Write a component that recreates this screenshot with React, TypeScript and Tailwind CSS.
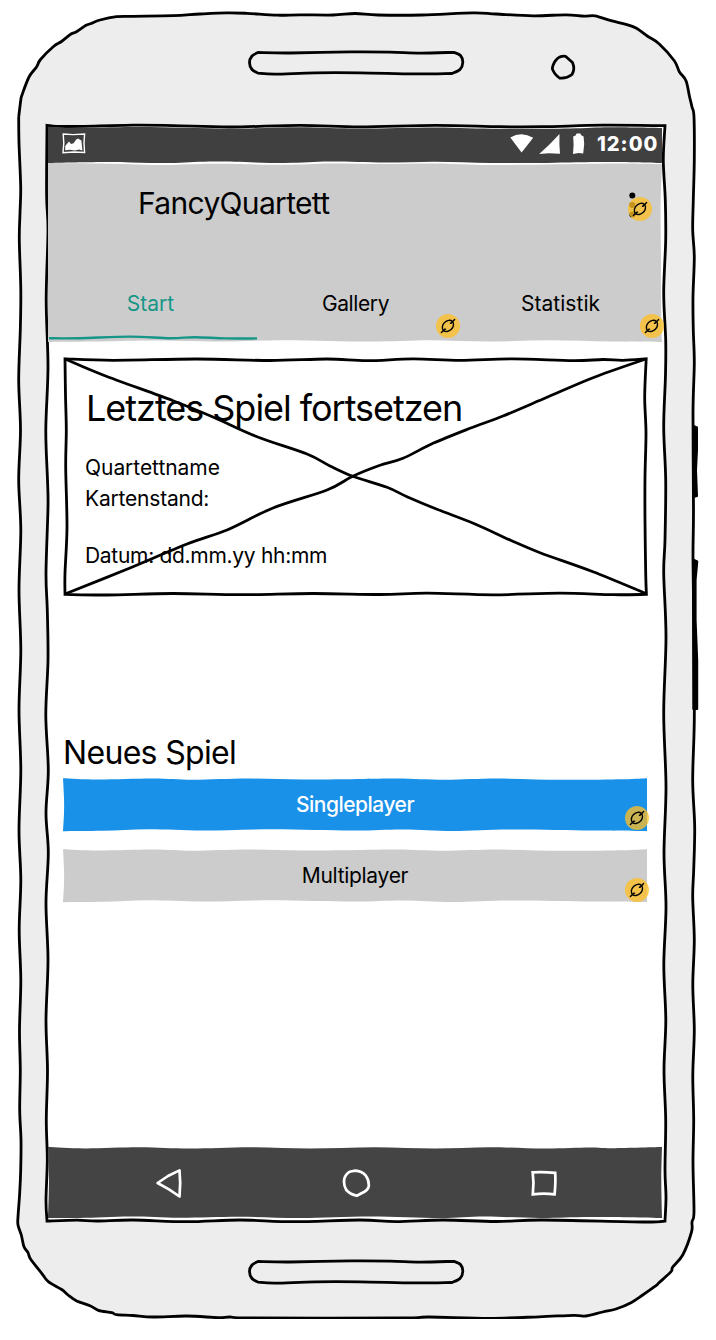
import React from "react";

type Pt = [number, number];

/** Smooth curve through a list of points (Catmull-Rom to Bezier). */
function curve(p: Pt[], move = true): string {
  let d = move ? `M${p[0][0]} ${p[0][1]}` : `L${p[0][0]} ${p[0][1]}`;
  for (let i = 0; i < p.length - 1; i++) {
    const a = p[Math.max(i - 1, 0)];
    const b = p[i];
    const c = p[i + 1];
    const e = p[Math.min(i + 2, p.length - 1)];
    d += `C${b[0] + (c[0] - a[0]) / 6} ${b[1] + (c[1] - a[1]) / 6} ${c[0] - (e[0] - b[0]) / 6} ${c[1] - (e[1] - b[1]) / 6} ${c[0]} ${c[1]}`;
  }
  return d;
}

/** Closed shape made of several wavy sides with sharp corners between them. */
const closed = (...sides: Pt[][]) => sides.map((s, i) => curve(s, i === 0)).join("") + "Z";

const BODY: Pt[] = [
  [18.7, 117], [20.8, 100], [22, 95], [29, 77], [36.5, 67], [40.5, 59.5], [53.5, 46.5], [61.5, 41.5], [71, 34], [76.5, 31.8],
  [86, 25.3], [90.5, 23.7], [100, 20], [116.5, 16.7], [133, 16.3], [173, 15.7], [200, 14], [227, 12.8], [247, 13.3],
  [277, 15.2], [300, 14.8], [333, 15], [355, 13.5], [378, 15], [422, 15], [473, 12.8], [496, 14], [533, 15.8], [566, 14.8],
  [584, 16.2], [595, 15.8], [611, 20.7], [626, 24.3], [636, 28], [648, 36.5], [659, 43.7], [674.3, 60.7], [679.3, 71.7],
  [686, 80.7], [689.5, 96.5], [692, 107], [694, 117], [694.3, 160], [693.3, 200], [692.7, 230], [694.3, 257], [693, 297],
  [693.3, 330], [694.3, 363], [693, 413], [693.5, 510], [693, 560], [694, 640], [694.3, 720], [692.7, 780], [694.7, 827],
  [693.7, 870], [692.7, 897], [694.3, 940], [692.8, 985], [694.3, 1030], [692.8, 1075], [693.7, 1120], [693, 1163], [694, 1212],
  [692, 1222], [691.5, 1232], [682.7, 1255], [672.7, 1267], [671, 1271.7], [658.7, 1283], [656, 1285.7], [642.7, 1295],
  [631, 1302.7], [616, 1309], [602.7, 1312], [586, 1316], [574, 1315.3], [539, 1316.8], [489, 1318.3], [429, 1317],
  [400, 1318], [253, 1318], [230, 1317], [218, 1317.7], [187, 1316], [153, 1317], [133, 1315.5], [116.7, 1314.7],
  [111.7, 1312.7], [98.3, 1310.3], [90, 1305.7], [76.7, 1301], [68, 1295], [61.7, 1289.5], [48.3, 1281.7], [41.7, 1273.3],
  [30.7, 1259.3], [28, 1252.7], [24, 1246.7], [21.3, 1235], [18, 1225], [18, 1216.7], [19.7, 1193], [20.7, 1170], [21, 1140],
  [19.7, 1110], [20.3, 1070], [19.5, 1030], [20.8, 980], [19.2, 930], [20.8, 880], [19, 830], [20.8, 770], [19, 710],
  [20.8, 650], [19, 590], [20.8, 530], [18.7, 480], [20.5, 430], [18.7, 380], [20.3, 330], [20.8, 290], [19.3, 240],
  [20, 213], [20.7, 187], [19, 143], [18.7, 117],
];

const SCREEN = closed(
  [[47, 125.3], [67, 126.5], [133, 125.2], [173, 125.6], [230, 127], [300, 125.4], [360, 126.8], [436, 125.3], [500, 126.7], [543, 126.7], [603, 125.2], [665, 125.7]],
  [[665, 125.7], [663.3, 160], [665.3, 200], [665.7, 240], [663.7, 293], [665.7, 340], [665.5, 375], [663.7, 427], [665.7, 480], [665, 540], [663.7, 573], [666, 637], [663.7, 713], [666, 787], [664, 853], [666, 907], [663.8, 965], [665.8, 1020], [664, 1070], [665.7, 1120], [665, 1170], [666, 1197], [665, 1220.7]],
  [[665, 1221], [643, 1222], [543, 1220], [496, 1221.5], [443, 1220], [396, 1221.7], [360, 1220], [293, 1221.7], [240, 1220], [187, 1221.7], [133, 1220], [97, 1221], [77, 1220.2], [47, 1221]],
  [[47, 1221], [46, 1200], [47.3, 1160], [46.3, 1120], [47.5, 1070], [46, 1020], [48, 960], [46, 903], [48.3, 853], [46, 813], [48.3, 770], [45.8, 715], [48, 660], [47.3, 610], [46, 573], [48, 507], [47.5, 480], [45.8, 430], [48, 367], [46.2, 300], [48, 230], [46.6, 195], [47, 125.3]],
);

const pill = (y: number) =>
  closed(
    [[258, y + 1], [290, y + 1.5], [350, y + 0.4], [390, y + 0.6], [420, y + 1.6], [454, y + 0.8]],
    [[454, y + 0.8], [460.5, y + 4], [462.8, y + 11], [460, y + 18], [452, y + 22]],
    [[452, y + 22], [414, y + 22.4], [360, y + 21.3], [315, y + 21.3], [275, y + 22.6], [258, y + 21.6]],
    [[258, y + 21.6], [252, y + 18], [249.5, y + 11], [252, y + 4.5], [258, y + 1]],
  );

function PhoneBody() {
  return (
    <svg className="absolute inset-0" width="716" height="1340" viewBox="0 0 716 1340" fill="none" stroke="#000" strokeWidth="2.8" strokeLinejoin="miter">
      <clipPath id="page-edge">
        <rect width="716" height="1319" />
      </clipPath>
      <g clipPath="url(#page-edge)">
        <path d={curve(BODY)} fill="#ededed" />
      </g>
      <path d="M693.5 426L697 427.5L697 450L696 470L697 496L693.5 497Z" fill="#000" strokeWidth="2" strokeLinejoin="round" />
      <path d="M693 559.5L697.3 561.5L695.6 580L695.6 620L697.2 660L697.2 709L693.3 709Z" fill="#000" strokeWidth="2" strokeLinejoin="round" />
      <path d={SCREEN} fill="#fff" />
      <path d={pill(51.5)} strokeLinejoin="round" />
      <path d={pill(1260.5)} strokeLinejoin="round" />
      <path d="M558 58Q561 55.7 565.5 56.3L572.5 62.5Q575.3 69 572 74.5Q566 79 559.5 78Q553.5 73.5 552.3 68.5Q553 62.5 558 58Z" strokeLinejoin="round" />
    </svg>
  );
}

/** Small marker that shows that an element is linked. */
function LinkBadge({ className }: { className: string }) {
  return (
    <svg className={`absolute size-6 ${className}`} viewBox="0 0 24 24" fill="none" stroke="#000" strokeWidth="1.4" strokeLinecap="round">
      <circle cx="12" cy="12" r="12" fill="#ffbf25" fillOpacity="0.77" stroke="none" />
      <ellipse cx="12" cy="11.9" rx="6.3" ry="4.8" transform="rotate(-45 12 12)" />
      <path d="M5.4 18.5L8.9 15.2L9.6 15.1M18.6 5.5L15 9.2L14.4 9.2" />
    </svg>
  );
}

function StatusBar() {
  return (
    <div className="relative h-[38px]">
      <svg className="absolute inset-0" width="616" height="38" viewBox="48 125 616 38">
        <path
          fill="#404040"
          d={closed(
            [[48, 126.7], [75, 127.8], [140, 127], [230, 128.6], [300, 127.3], [360, 128.6], [436, 127.4], [500, 128.8], [570, 128.5], [610, 127.3], [662, 128]],
            [[662, 128], [662, 163]],
            [[662, 163], [600, 162], [540, 163], [490, 163], [435, 161.8], [385, 162.6], [330, 161.6], [285, 163], [215, 161.6], [165, 163.2], [110, 162], [48, 163]],
          )}
        />
      </svg>
      <div className="relative flex h-[38px] items-center pl-[13px] pr-[6px] text-white">
        <svg width="26" height="24" viewBox="0 0 26 24" fill="none" className="-mt-[2px]">
          <path d="M2.2 3L12 3.6L23.6 3L23 12L23.6 21.4L13 21L2 21.8L2.8 12Z" stroke="#fff" strokeWidth="1.4" />
          <path d="M4.2 19.2L4.2 15L8 10.4L10 13L12.6 12.2L15.2 8.4L17 7.4L20.4 9.4L21.4 19.4L18 18.6L14 19.6L9 18.8Z" fill="#fff" />
        </svg>
        <div className="ml-auto flex items-center">
          <svg width="76" height="22" viewBox="510 134 76 22" fill="#fff">
            <path d="M510.3 138.6Q521.5 131.8 533.2 138.8L521.6 153.5Z" />
            <path d="M559.5 135L559.4 145L560 154.8L549 154.2L539.2 155Q549.5 146 559.5 135Z" />
            <path d="M573.2 137.4L575.6 136.4L576.6 134.4L580.4 134.6L581.3 136.2L583.6 137.4L584.2 145L583.2 154.6L578.5 154.1L573 155L573.6 146Z" />
          </svg>
          <span className="ml-[11px] w-[61px] whitespace-nowrap text-[20px] font-extrabold leading-6 tracking-[1px]">12:00</span>
        </div>
      </div>
    </div>
  );
}

function Header() {
  return (
    <header className="relative h-[179px]">
      <svg className="absolute inset-0" width="616" height="180" viewBox="48 163 616 180">
        <path
          fill="#cccccc"
          d={closed(
            [[48, 163], [110, 163.7], [165, 165], [215, 163.8], [285, 164.8], [330, 163.5], [385, 164], [435, 163.5], [490, 165], [560, 164.2], [620, 163.4], [662, 164]],
            [[662, 163], [660.6, 210], [661, 260], [661, 300], [662, 342]],
            [[662, 342], [610, 341.6], [550, 340.3], [490, 341.6], [430, 340.3], [370, 341.6], [285, 340.2], [220, 341.5], [150, 340.5], [95, 341.6], [48, 342]],
          )}
        />
        <path d={curve([[49, 338.3], [80, 338.2], [130, 336.6], [170, 338.2], [195, 337.2], [225, 338.4], [257, 338.4]])} fill="none" stroke="#169688" strokeWidth="2.4" />
      </svg>
      <div className="relative flex h-[82px] items-center pl-[90px]">
        <h1 className="-mt-[2px] whitespace-nowrap text-[30px] leading-9 tracking-[-0.68px]">FancyQuartett</h1>
        <svg className="ml-auto mr-[28px] mt-[2px]" width="8" height="28" viewBox="0 0 8 28">
          <circle cx="4.3" cy="4.5" r="3" />
          <circle cx="4.3" cy="14" r="3" />
          <circle cx="4.3" cy="23.5" r="3" />
        </svg>
        <LinkBadge className="right-[12px] top-[34px]" />
      </div>
      <nav className="relative flex h-[97px] w-[615px] pt-[45px] text-[21px] leading-7">
        <div className="relative flex-1 text-center text-[#169688]">Start</div>
        <div className="relative flex-1 text-center tracking-[-0.4px]">
          Gallery
          <LinkBadge className="-right-[2px] top-[24px]" />
        </div>
        <div className="relative flex-1 text-center tracking-[0.05px]">
          Statistik
          <LinkBadge className="-right-[1px] top-[24px]" />
        </div>
      </nav>
    </header>
  );
}

function LastGameCard() {
  return (
    <section className="relative h-[240px]">
      <svg className="absolute inset-0 z-10" width="586" height="240" viewBox="63 357 586 240" fill="none" stroke="#000" strokeWidth="2.8">
        <path
          d={closed(
            [[65, 358.8], [113, 360.3], [197, 359], [270, 360.5], [327, 359], [367, 360.7], [413, 358.9], [460, 360.4], [513, 358.9], [573, 360.7], [603, 359.5], [623, 360.3], [646.2, 358.8]],
            [[646.2, 358.8], [644.7, 397], [646, 433], [645, 477], [645, 520], [645.7, 573], [646.4, 594.4]],
            [[646.4, 594.4], [613, 594.7], [560, 593.2], [493, 594.8], [427, 593.2], [380, 594.5], [313, 593.5], [240, 594.7], [173, 593.5], [107, 595], [65, 594.4]],
            [[65, 594.4], [65, 573], [67, 527], [65.7, 467], [66.3, 430], [65.5, 395], [65, 358.8]],
          )}
        />
        <path d={curve([[65, 359], [103, 375], [173, 400.7], [213, 417], [257, 436.7], [307, 454], [330, 466], [352.7, 476.3], [387, 487.3], [407, 496.7], [437, 509.3], [475, 524], [510, 540], [540, 552.7], [593, 571.7], [646, 593.5]])} />
        <path d={curve([[65, 594], [125, 570], [187, 544], [227, 530], [273, 508], [327, 490], [352.7, 476.3], [380, 465.3], [403, 458.3], [433, 443.3], [470, 428.3], [503, 416], [547, 397.3], [593, 377.7], [646, 358.9]])} />
      </svg>
      <div className="flex flex-col pl-[22px] pt-[29px] text-[21px] leading-[31px]">
        <h2 className="ml-px whitespace-nowrap text-[36px] leading-[44px] tracking-[-1.03px]">Letztes Spiel fortsetzen</h2>
        <p className="mt-[22px] tracking-[-0.05px]">Quartettname</p>
        <p className="tracking-[-0.2px]">Kartenstand:</p>
        <p className="mt-[26px] tracking-[-0.3px]">Datum: dd.mm.yy hh:mm</p>
      </div>
    </section>
  );
}

function GameButton({ label, fill, text, badge }: { label: string; fill: string; text: string; badge: string }) {
  return (
    <button className={`relative block h-[54px] w-[584px] text-[21px] leading-7 ${text}`}>
      <svg className="absolute inset-0" width="584" height="54" viewBox="0 0 584 54">
        <path
          className={fill}
          d={closed(
            [[0, 0.3], [35, 1.6], [90, 0.6], [130, 1.8], [185, 0.6], [240, 1.6], [300, 1], [335, 0.6], [382, 1.8], [435, 0.6], [500, 1.8], [560, 1.2], [584, 0.2]],
            [[584, 0.2], [584, 53]],
            [[584, 53], [530, 52.5], [450, 51.4], [390, 53], [340, 51.5], [290, 52.6], [210, 51.3], [140, 52.5], [85, 51.3], [40, 52.8], [0, 53.2]],
            [[0, 53.2], [1, 35], [1, 20], [0, 0.3]],
          )}
        />
      </svg>
      <span className="relative">{label}</span>
      <LinkBadge className={badge} />
    </button>
  );
}

function NavBar() {
  return (
    <footer className="relative h-[72px]">
      <svg className="absolute inset-0" width="616" height="72" viewBox="48 1147 616 72">
        <path
          fill="#444444"
          d={closed(
            [[48, 1147], [85, 1148.4], [140, 1147.3], [190, 1148.6], [250, 1147.3], [310, 1148.6], [375, 1147.3], [435, 1148.6], [490, 1147.3], [545, 1148.6], [590, 1147.6], [610, 1148.2], [662, 1147]],
            [[662, 1147], [661.3, 1180], [662, 1218]],
            [[662, 1218], [590, 1217], [540, 1218], [485, 1216.5], [440, 1218], [370, 1216.5], [300, 1218], [240, 1216.7], [180, 1217.7], [130, 1216.5], [80, 1218], [48, 1218]],
            [[48, 1218], [49, 1180], [48, 1147]],
          )}
        />
      </svg>
      <div className="relative flex justify-between pl-[106px] pr-[105px] pt-[21px]">
        <svg width="30" height="30" viewBox="154 1168 30 30" fill="none" stroke="#fff" strokeWidth="2.7" strokeLinejoin="round">
          <path d="M157.6 1183L168 1176L179.5 1170.4Q180.9 1183 179.5 1196.5L169 1189.4Z" />
        </svg>
        <svg width="30" height="30" viewBox="341.5 1168 30 30" fill="none" stroke="#fff" strokeWidth="2.7" strokeLinejoin="round">
          <path d="M355 1170.7Q361 1171 365.2 1175.5Q368.6 1180 368.3 1186Q367.6 1190.5 361.5 1193L356.3 1195.8Q350 1194.5 345.8 1190Q342.5 1184.5 344 1178Q346 1173 350 1171.5Z" />
        </svg>
        <svg width="30" height="30" viewBox="529 1168 30 30" fill="none" stroke="#fff" strokeWidth="2.7" strokeLinejoin="miter">
          <path d="M532.7 1172.3Q543 1171.6 555.2 1172.8Q555.8 1182 554.6 1194.3Q544 1193 532.8 1194.3Q534.2 1183 532.7 1172.3Z" />
        </svg>
      </div>
    </footer>
  );
}

export default function App() {
  return (
    <div className="relative h-[1340px] w-[716px] overflow-hidden bg-white font-['Inter',sans-serif] text-black">
      <PhoneBody />
      <div className="relative flex h-[1219px] w-[664px] flex-col pl-12 pt-[125px]">
        <StatusBar />
        <Header />
        <main className="flex flex-1 flex-col pl-[15px] pt-[15px]">
          <LastGameCard />
          <h2 className="mt-[134px] whitespace-nowrap text-[32px] leading-[43px] tracking-[-0.68px]">Neues Spiel</h2>
          <div className="mt-[4px] flex flex-col gap-[17px]">
            <GameButton label="Singleplayer" fill="fill-[#1a91e8]" text="font-medium tracking-[-0.5px] text-white" badge="-right-[2px] top-[28px]" />
            <GameButton label="Multiplayer" fill="fill-[#cccccc]" text="tracking-[-0.3px] text-black" badge="-right-[2px] top-[29px]" />
          </div>
        </main>
        <NavBar />
      </div>
    </div>
  );
}
